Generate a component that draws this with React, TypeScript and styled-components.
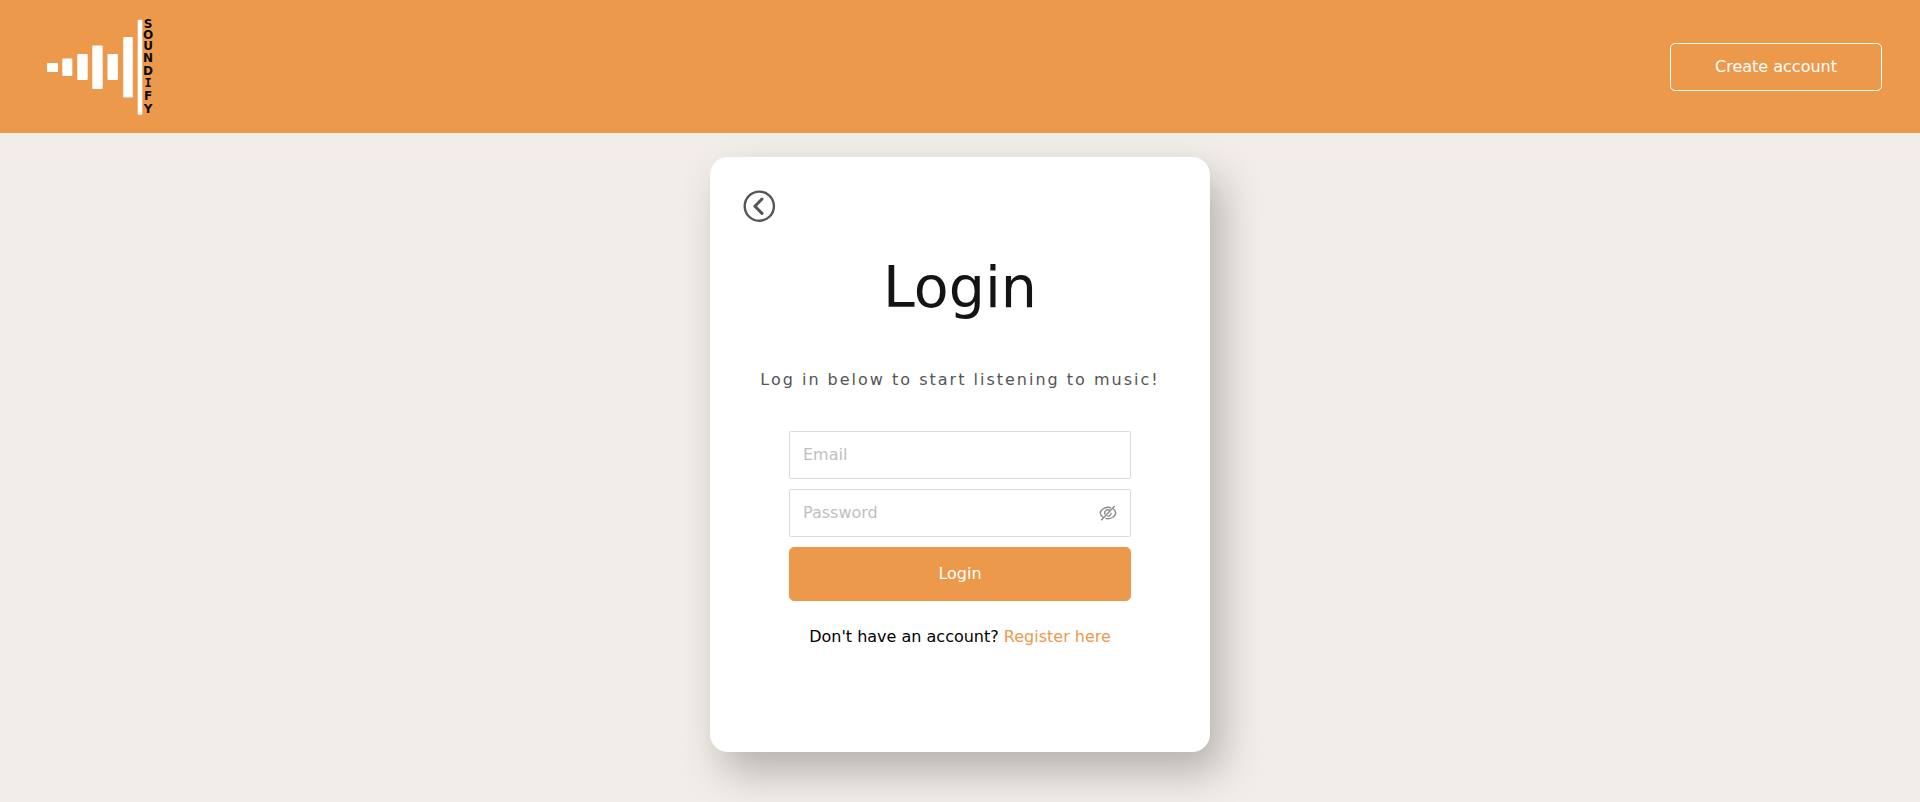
import React, { useState } from 'react';
import styled, { createGlobalStyle } from 'styled-components';

const orange = '#ec994b';

const GlobalStyle = createGlobalStyle`
  *, *::before, *::after {
    box-sizing: border-box;
  }

  body {
    margin: 0;
    background: #f1ede8;
    color: #141414;
    font-family: 'Lucida Sans', 'Lucida Grande', 'DejaVu Sans', sans-serif;
    font-size: 16px;
    line-height: 24px;
  }

  button, input {
    font: inherit;
  }
`;

const Page = styled.div`
  display: flex;
  flex-direction: column;
  min-height: 100vh;
`;

const Header = styled.header`
  display: flex;
  align-items: center;
  justify-content: space-between;
  padding: 18px 38px 18px 46px;
  background: ${orange};
`;

const LogoLink = styled.a`
  display: flex;
`;

const LogoLetter = styled.text<{ $slab?: boolean }>`
  fill: #0a0a0a;
  font-family: ${({ $slab }) => ($slab ? "'DejaVu Sans Mono', monospace" : "'DejaVu Sans', sans-serif")};
  font-size: 12px;
  font-weight: 700;
  text-anchor: middle;
`;

const Button = styled.button<{ $outlined?: boolean }>`
  width: ${({ $outlined }) => ($outlined ? '212px' : '100%')};
  height: ${({ $outlined }) => ($outlined ? '48px' : '54px')};
  padding: 0;
  border: 1px solid ${({ $outlined }) => ($outlined ? '#fff' : orange)};
  border-radius: 5px;
  background: ${orange};
  color: #fff;
  cursor: pointer;
`;

const Main = styled.main`
  display: flex;
  justify-content: center;
  padding: 24px 16px 50px;
`;

const Card = styled.section`
  display: flex;
  flex-direction: column;
  align-items: center;
  width: 100%;
  max-width: 500px;
  padding: 32px 32px 103px;
  border-radius: 18px;
  background: #fff;
  box-shadow: 12px 20px 40px rgba(0, 0, 0, 0.25);
`;

const BackButton = styled.button`
  display: flex;
  align-self: flex-start;
  padding: 0;
  border: 0;
  background: none;
  color: #555;
  cursor: pointer;
`;

const Title = styled.h1`
  margin: 28px 0 45px;
  font-size: 57px;
  font-weight: 400;
  line-height: 72px;
`;

const Subtitle = styled.p`
  margin: 0 0 39px;
  color: #555;
  letter-spacing: 2px;
  text-align: center;
`;

const Form = styled.form`
  display: flex;
  flex-direction: column;
  gap: 10px;
  width: 100%;
  max-width: 342px;
`;

const Field = styled.label`
  display: flex;
  align-items: center;
  height: 48px;
  padding: 0 13px;
  border: 1px solid #d9d9d9;
  border-radius: 2px;
`;

const Input = styled.input`
  flex: 1;
  min-width: 0;
  padding: 0;
  border: 0;
  outline: 0;
  background: none;
  color: #141414;

  &::placeholder {
    color: #bfbfbf;
    opacity: 1;
  }
`;

const EyeButton = styled.button`
  display: flex;
  padding: 0;
  border: 0;
  background: none;
  color: #8c8c8c;
  cursor: pointer;
`;

const Note = styled.p`
  margin: 24px 0 0;
  color: #000;
`;

const Link = styled.a`
  color: ${orange};
  text-decoration: none;
`;

const bars = [
  { x: 1, y: 45, w: 11, h: 9 },
  { x: 16.3, y: 40.5, w: 10, h: 17.5 },
  { x: 31.3, y: 36, w: 10.4, h: 26 },
  { x: 46.3, y: 27.500, w: 10.4, h: 43.500 },
  { x: 61.5, y: 36, w: 10.4, h: 26 },
  { x: 77.2, y: 19, w: 9.6, h: 60.5 },
  { x: 91.700, y: 1.700, w: 4.600, h: 95 },
];

const letterBaselines = [10, 21, 32, 44, 57, 69, 82, 95];

function Logo() {
  return (
    <svg width="112" height="97" viewBox="0 0 112 97" role="img" aria-label="Soundify">
      {bars.map((b) => (
        <rect key={b.x} x={b.x} y={b.y} width={b.w} height={b.h} rx="1" fill="#fff" />
      ))}
      {'SOUNDIFY'.split('').map((letter, i) => (
        <LogoLetter key={letter} x="102" y={letterBaselines[i]} $slab={letter === 'I'}>
          {letter}
        </LogoLetter>
      ))}
    </svg>
  );
}

function BackIcon() {
  return (
    <svg width="34" height="34" viewBox="0 0 34 34" fill="none" stroke="currentColor" aria-hidden="true">
      <circle cx="17.300" cy="17.200" r="14.600" strokeWidth="2.400" />
      <path d="M20 10 12.900 17.200l7.100 7.200" strokeWidth="3" strokeLinecap="round" strokeLinejoin="round" />
    </svg>
  );
}

function EyeIcon() {
  return (
    <svg width="18" height="18" viewBox="0 0 18 18" fill="none" stroke="currentColor" strokeWidth="1.4" aria-hidden="true">
      <path d="M12 3.900A8 8 0 0 0 9 3.300C5.100 3.300 1.800 5.800 1.200 9c.3 1.700 1.300 3.200 2.800 4.200" />
      <path d="M14.200 4.900c1.400 1 2.300 2.500 2.600 4.100-.6 3.200-3.900 5.700-7.800 5.700-.9 0-1.700-.1-2.500-.4" />
      <path d="M10.900 6.600A3.100 3.100 0 0 0 6.200 10.500M12.100 8.800a3.100 3.100 0 0 1-4 3.200" />
      <path d="M15.800 1.900 2.200 16.200" />
    </svg>
  );
}

export default function App() {
  const [visible, setVisible] = useState(false);

  return (
    <Page>
      <GlobalStyle />
      <Header>
        <LogoLink href="#home">
          <Logo />
        </LogoLink>
        <Button type="button" $outlined>
          Create account
        </Button>
      </Header>
      <Main>
        <Card>
          <BackButton type="button" aria-label="Back">
            <BackIcon />
          </BackButton>
          <Title>Login</Title>
          <Subtitle>Log in below to start listening to music!</Subtitle>
          <Form onSubmit={(e) => e.preventDefault()}>
            <Field>
              <Input type="email" placeholder="Email" aria-label="Email" />
            </Field>
            <Field>
              <Input type={visible ? 'text' : 'password'} placeholder="Password" aria-label="Password" />
              <EyeButton type="button" aria-label="Show password" onClick={() => setVisible(!visible)}>
                <EyeIcon />
              </EyeButton>
            </Field>
            <Button type="submit">Login</Button>
          </Form>
          <Note>
            Don't have an account? <Link href="#register">Register here</Link>
          </Note>
        </Card>
      </Main>
    </Page>
  );
}
